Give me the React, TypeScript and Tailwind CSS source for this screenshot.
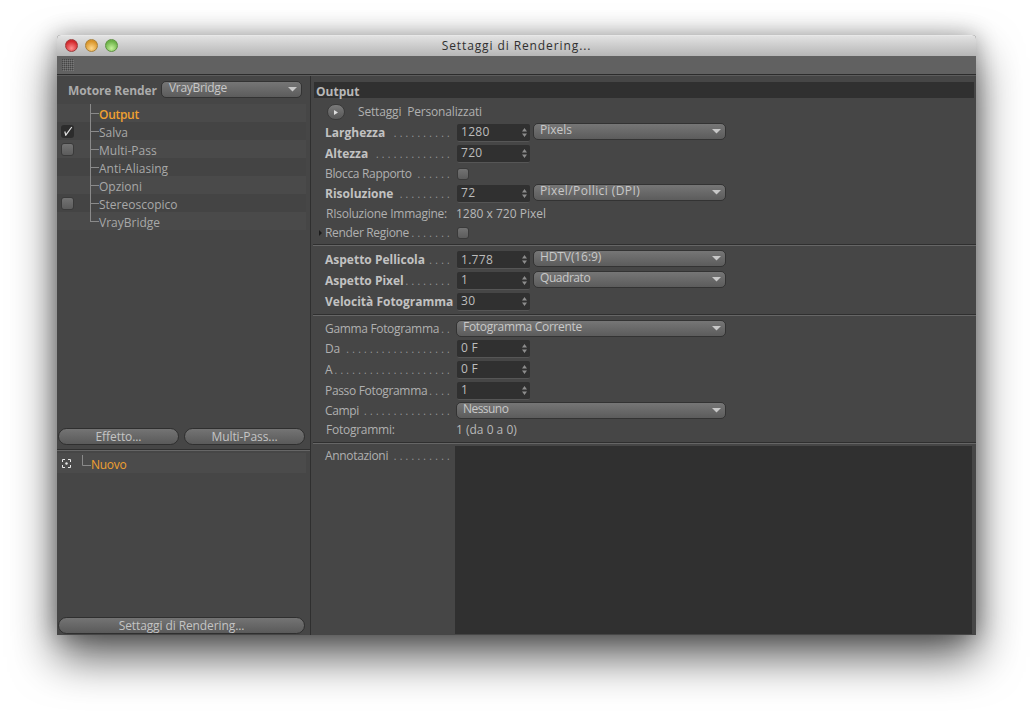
const font = { fontFamily: '"Open Sans", "Noto Sans", sans-serif' };

function Caret() {
  return (
    <svg width="9" height="5" viewBox="0 0 9 5" className="shrink-0">
      <path d="M0 0H9L4.5 4.5Z" fill="#c8c8c8" />
    </svg>
  );
}

function Dropdown({ text, cls = "", track = "tracking-[-0.3px]" }: { text: string; cls?: string; track?: string }) {
  return (
    <div
      className={`flex h-[17px] items-center justify-between rounded-[5px] border border-[#333333] bg-gradient-to-b from-[#767676] to-[#5c5c5c] pr-[4px] pl-[6px] text-[12px] leading-none text-[#c8c8c8] ${cls}`}
    >
      <span className={`-mt-[3px] ${track}`}>{text}</span>
      <Caret />
    </div>
  );
}

function Field({ value }: { value: string }) {
  return (
    <div className="flex h-[18px] w-[73px] shrink-0 items-center justify-between rounded-[2px] border-b border-b-[#565656] bg-[#303030] pl-[4px] pr-[3px] text-[12px] leading-none text-[#bdbdbd]">
      <span className="tracking-[0.3px]">{value}</span>
      <svg width="5" height="9" viewBox="0 0 5 9">
        <path d="M2.5 0L5 3.5H0Z M2.5 9L0 5.5H5Z" fill="#8d8d8d" />
      </svg>
    </div>
  );
}

function Check({ cls = "h-[12px] w-[12px]" }: { cls?: string }) {
  return <div className={`rounded-[3px] border border-[#3a3a3a] bg-gradient-to-b from-[#737373] to-[#5c5c5c] ${cls}`} />;
}

function Label({ text, dots = 0, bold = false }: { text: string; dots?: number; bold?: boolean }) {
  return (
    <div className={`flex w-[125px] shrink-0 items-center justify-between whitespace-nowrap text-[12px] leading-none ${bold ? "font-bold text-[#c2c2c2]" : "tracking-[-0.33px] text-[#b0b0b0]"}`}>
      <span>{text}</span>
      {dots > 0 && (
        <span className="-mr-[3px] text-[10px] font-normal tracking-[3.3px] text-[#9a9a9a]">{".".repeat(dots)}</span>
      )}
    </div>
  );
}

function Row({ h, children, cls = "" }: { h: string; children?: React.ReactNode; cls?: string }) {
  return <div className={`flex items-center gap-[7px] pl-[14px] ${h} ${cls}`}>{children}</div>;
}

function Sep({ cls = "" }: { cls?: string }) {
  return <div className={`h-[2px] border-t border-t-[#2f2f2f] border-b border-b-[#666666] ${cls}`} />;
}

function Tree({ last = false }: { last?: boolean }) {
  return (
    <div className="relative h-full w-[9px] shrink-0">
      <div className={`absolute left-0 w-px bg-[#8a8a8a] ${last ? "top-0 h-[10px]" : "top-0 h-full"}`} />
      <div className="absolute left-0 top-[9px] h-px w-[9px] bg-[#8a8a8a]" />
    </div>
  );
}

const items: { name: string; box?: "checked" | "empty"; active?: boolean }[] = [
  { name: "Output", active: true },
  { name: "Salva", box: "checked" },
  { name: "Multi-Pass", box: "empty" },
  { name: "Anti-Aliasing" },
  { name: "Opzioni" },
  { name: "Stereoscopico", box: "empty" },
  { name: "VrayBridge" },
];

function PillButton({ text, cls = "" }: { text: string; cls?: string }) {
  return (
    <div className={`flex h-[17px] items-center justify-center rounded-[9px] border border-[#2f2f2f] bg-gradient-to-b from-[#747474] to-[#5a5a5a] pt-px text-[12px] leading-none tracking-[-0.08px] text-[#c4c4c4] ${cls}`}>
      {text}
    </div>
  );
}

export default function App() {
  return (
    <div className="h-[714px] w-[1033px] overflow-hidden bg-white pl-[57px] pt-[35px]" style={font}>
      <div className="flex h-[600px] w-[919px] flex-col overflow-hidden rounded-t-[4px] bg-[#464646] shadow-[0_22px_45px_rgba(0,0,0,0.65),0_0_22px_rgba(0,0,0,0.3)]">
        {/* Title bar */}
        <div className="relative flex h-[21px] shrink-0 items-center justify-center border-t border-t-[#e8e8e8] bg-gradient-to-b from-[#e2e2e2] to-[#b6b6b6]">
          <div className="absolute left-[8px] top-[3px] flex gap-[7px]">
            <div className="h-[13px] w-[13px] rounded-full border border-[#9c3b3b] bg-[radial-gradient(circle_at_50%_75%,#ff8e8e,#d2282c_70%)]" />
            <div className="h-[13px] w-[13px] rounded-full border border-[#a8803a] bg-[radial-gradient(circle_at_50%_75%,#ffd88a,#d9952a_70%)]" />
            <div className="h-[13px] w-[13px] rounded-full border border-[#5f9142] bg-[radial-gradient(circle_at_50%_75%,#c5f29a,#6cb248_70%)]" />
          </div>
          <span className="text-[12px] leading-none tracking-[0.9px] text-[#303030]">Settaggi di Rendering...</span>
        </div>
        {/* Toolbar */}
        <div className="flex h-[19px] shrink-0 items-center border-b border-b-[#2c2c2c] bg-[#616161] pl-[5px]">
          <svg width="12" height="12" viewBox="0 0 12 12">
            <defs>
              <pattern id="grip" width="2" height="2" patternUnits="userSpaceOnUse">
                <rect width="1" height="1" fill="#454545" />
                <rect x="1" y="1" width="1" height="1" fill="#787878" />
              </pattern>
            </defs>
            <rect width="12" height="12" fill="url(#grip)" />
          </svg>
        </div>
        <div className="h-px shrink-0 bg-[#5c5c5c]" />
        <div className="flex min-h-0 flex-1">
          {/* Left panel */}
          <div className="flex w-[254px] shrink-0 flex-col border-r border-r-[#2f2f2f]">
            <div className="flex h-[28px] shrink-0 items-center pl-[11px] pr-[8px] pt-[2px]">
              <span className="w-[93px] shrink-0 text-[12px] font-bold leading-none tracking-[-0.1px] text-[#ababab]">Motore Render</span>
              <Dropdown text="VrayBridge" cls="mb-[3px] flex-1 !pl-[7px]" />
            </div>
            <div className="mr-[4px] shrink-0">
              {items.map((item, i) => (
                <div key={item.name} className={`flex h-[18px] items-center ${i % 2 === 0 ? "bg-[#4a4a4a]" : "bg-[#444444]"}`}>
                  <div className="w-[33px] shrink-0 pl-[4px]">
                    {item.box === "empty" && <Check cls="h-[13px] w-[13px]" />}
                    {item.box === "checked" && (
                      <div className="flex h-[13px] w-[13px] items-center justify-center rounded-[3px] bg-[#2c2c2c]">
                        <svg width="10" height="10" viewBox="0 0 10 10">
                          <path d="M1.8 5.5L2.8 9.2L8.8 1" stroke="#e0e0e0" strokeWidth="1.2" fill="none" />
                        </svg>
                      </div>
                    )}
                  </div>
                  <Tree last={i === items.length - 1} />
                  <span className={`pt-[3px] text-[12px] leading-none ${item.active ? "font-semibold tracking-[-0.3px] text-[#f0a030]" : "text-[#a8a8a8]"}`}>
                    {item.name}
                  </span>
                </div>
              ))}
            </div>
            <div className="h-[198px] shrink-0" />
            <div className="flex shrink-0 gap-[5px] pl-px pr-[5px]">
              <PillButton text="Effetto..." cls="flex-1" />
              <PillButton text="Multi-Pass..." cls="flex-1" />
            </div>
            <div className="mt-[4px] shrink-0"><Sep /></div>
            <div className="mr-[4px] mt-[2px] flex h-[20px] shrink-0 items-center bg-[#4b4b4b] pl-[5px]">
              <svg width="9" height="9" viewBox="0 0 9 9" className="shrink-0">
                <path d="M0.5 3V0.5H3M6 0.5H8.5V3M8.5 6V8.5H6M3 8.5H0.5V6" stroke="#e8e8e8" fill="none" />
                <circle cx="4.5" cy="4.5" r="1.2" fill="#e8e8e8" />
              </svg>
              <svg width="10" height="12" viewBox="0 0 10 12" className="ml-[11px] mr-[-1px] mt-[-5px] shrink-0">
                <path d="M0.5 0V10.5H9" stroke="#8a8a8a" fill="none" />
              </svg>
              <span className="pt-[3px] text-[12px] leading-none tracking-[-0.3px] text-[#f0a030]">Nuovo</span>
            </div>
            <div className="flex-1" />
            <PillButton text="Settaggi di Rendering..." cls="mb-px ml-px mr-[5px] shrink-0 !tracking-[-0.1px]" />
          </div>
          {/* Right panel */}
          <div className="flex min-w-0 flex-1 flex-col">
            <div className="ml-[3px] mr-[2px] mt-[6px] flex h-[16px] shrink-0 items-center bg-[#303030] pl-[2px] pt-[3px] text-[12px] font-bold leading-none text-[#b8b8b8]">
              Output
            </div>
            <Row h="h-[24px] shrink-0 pt-[4px]">
              <div className="ml-[2px] flex h-[16px] w-[18px] shrink-0 items-center justify-center rounded-full border border-[#3a3a3a] bg-gradient-to-b from-[#7a7a7a] to-[#585858]">
                <svg width="4" height="5" viewBox="0 0 4 5"><path d="M0 0L4 2.5L0 5Z" fill="#dddddd" /></svg>
              </div>
              <span className="ml-[6px] text-[12px] leading-none tracking-[-0.17px] text-[#b0b0b0]">Settaggi&nbsp; Personalizzati</span>
            </Row>
            <Row h="h-[21px] shrink-0"><Label text="Larghezza" dots={10} bold /><Field value="1280" /><Dropdown text="Pixels" cls="mb-[3px] ml-[-4px] w-[193px]" track="tracking-[0px]" /></Row>
            <Row h="h-[21px] shrink-0"><Label text="Altezza" dots={13} bold /><Field value="720" /></Row>
            <Row h="h-[19px] shrink-0"><Label text="Blocca Rapporto" dots={6} /><Check /></Row>
            <Row h="h-[21px] shrink-0"><Label text="Risoluzione" dots={9} bold /><Field value="72" /><Dropdown text="Pixel/Pollici (DPI)" cls="mb-[3px] ml-[-4px] w-[193px]" track="tracking-[0.4px]" /></Row>
            <Row h="h-[19px] shrink-0"><div className="w-[124px] shrink-0 whitespace-nowrap pl-px text-[12px] leading-none tracking-[-0.25px] text-[#b0b0b0]">RIsoluzione Immagine:</div><span className="text-[12px] leading-none text-[#b8b8b8]">1280 x 720 Pixel</span></Row>
            <Row h="h-[20px] shrink-0" cls="relative">
              <svg width="3" height="6" viewBox="0 0 3 6" className="absolute left-[8px] top-[7px]"><path d="M0 0L3 3L0 6Z" fill="#1c1c1c" /></svg>
              <Label text="Render Regione" dots={7} /><Check />
            </Row>
            <Sep cls="ml-[2px] mt-px shrink-0" />
            <Row h="h-[20px] mt-[4px] shrink-0"><Label text="Aspetto Pellicola" dots={4} bold /><Field value="1.778" /><Dropdown text="HDTV(16:9)" cls="mb-[3px] ml-[-4px] w-[193px]" track="tracking-[-0.1px]" /></Row>
            <Row h="h-[21px] shrink-0"><Label text="Aspetto Pixel" dots={8} bold /><Field value="1" /><Dropdown text="Quadrato" cls="mb-[3px] ml-[-4px] w-[193px]" track="tracking-[-0.45px]" /></Row>
            <Row h="h-[21px] shrink-0"><Label text="Velocità Fotogramma" bold /><Field value="30" /></Row>
            <Sep cls="ml-[2px] mt-[2px] shrink-0" />
            <Row h="h-[19px] mt-[3px] shrink-0"><Label text="Gamma Fotogramma" dots={2} /><Dropdown text="Fotogramma Corrente" cls="ml-[-1px] w-[270px]" /></Row>
            <Row h="h-[21px] shrink-0"><Label text="Da" dots={18} /><Field value="0 F" /></Row>
            <Row h="h-[21px] shrink-0"><Label text="A" dots={20} /><Field value="0 F" /></Row>
            <Row h="h-[21px] shrink-0"><Label text="Passo Fotogramma" dots={4} /><Field value="1" /></Row>
            <Row h="h-[19px] shrink-0"><Label text="Campi" dots={15} /><Dropdown text="Nessuno" cls="ml-[-1px] w-[270px]" track="tracking-[-0.55px]" /></Row>
            <Row h="h-[19px] shrink-0"><div className="w-[124px] shrink-0 whitespace-nowrap pl-px text-[12px] leading-none tracking-[-0.25px] text-[#b0b0b0]">Fotogrammi:</div><span className="text-[12px] leading-none text-[#b8b8b8]">1 (da 0 a 0)</span></Row>
            <Sep cls="ml-[2px] mt-[3px] shrink-0" />
            <div className="flex min-h-0 flex-1 gap-[5px] pb-px pl-[14px] pt-[2px]">
              <div className="mt-[4px] h-[14px]"><Label text="Annotazioni" dots={10} /></div>
              <div className="mr-[4px] flex-1 bg-[#303030]" />
            </div>
          </div>
        </div>
      </div>
    </div>
  );
}
